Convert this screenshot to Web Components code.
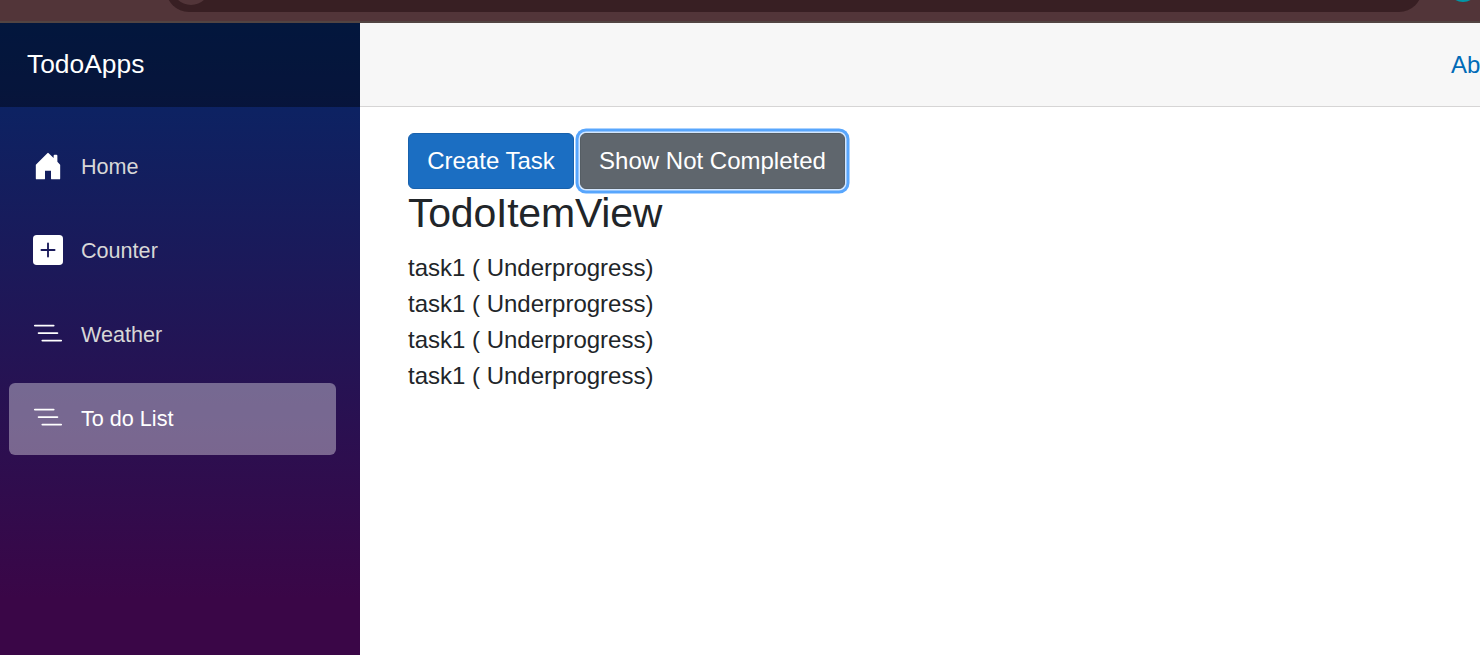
<!DOCTYPE html>
<html lang="en">
<head>
<meta charset="utf-8">
<title>TodoApps</title>
<style>
html,body{margin:0;height:100%;overflow:hidden}
body{font:24px/1.5 "Liberation Sans",Arial,sans-serif;color:#212529;background:#fff}
</style>
</head>
<body>
<todo-app></todo-app>
<script>
const define = (name, html, setup) => customElements.define(name, class extends HTMLElement {
  connectedCallback() {
    if (this.shadowRoot) return;
    this.attachShadow({ mode: 'open' }).innerHTML = html;
    if (setup) setup(this);
  }
});

const icons = {
  home: 'M6.4 14.6V10.5H9.6V14.6a.5.5 0 0 0 .5.5h3.9a.5.5 0 0 0 .5-.5v-7.1a.5.5 0 0 0-.146-.354L13 5.793V2.5a.5.5 0 0 0-.5-.5h-1a.5.5 0 0 0-.5.5v1.293L8.354 1.146a.5.5 0 0 0-.708 0l-6 6A.5.5 0 0 0 1.5 7.5v7.1a.5.5 0 0 0 .5.5h3.9a.5.5 0 0 0 .5-.5Z',
  plus: 'M2 0a2 2 0 0 0-2 2v12a2 2 0 0 0 2 2h12a2 2 0 0 0 2-2V2a2 2 0 0 0-2-2H2zm6.5 4.5v3h3a.5.5 0 0 1 0 1h-3v3a.5.5 0 0 1-1 0v-3h-3a.5.5 0 0 1 0-1h3v-3a.5.5 0 0 1 1 0z',
  list: 'M4.5 11.5A.5.5 0 0 1 5 11h10a.5.5 0 0 1 0 1H5a.5.5 0 0 1-.5-.5zm-2-4A.5.5 0 0 1 3 7h10a.5.5 0 0 1 0 1H3a.5.5 0 0 1-.5-.5zm-2-4A.5.5 0 0 1 1 3h10a.5.5 0 0 1 0 1H1a.5.5 0 0 1-.5-.5z'
};

define('browser-edge', `<style>
  :host{display:flex;box-sizing:border-box;height:23px;padding:0 0 0 166px;background:#523539;border-bottom:2px solid #524442;overflow:hidden;align-items:flex-end}
  .address{flex:none;width:1256px;height:46px;margin-bottom:9px;border-radius:23px;background:#381f23;display:flex;align-items:flex-end}
  .site{width:38px;height:38px;border-radius:50%;background:#523539;margin:0 0 7.5px 6px}
  .avatar{flex:none;width:30px;height:30px;border-radius:50%;background:#0097a7;margin:0 0 19px 26px}
</style><div class="address"><div class="site"></div></div><div class="avatar"></div>`);

define('nav-item', `<style>
  :host{display:block}
  a{display:flex;align-items:center;height:72px;padding-left:24px;border-radius:6px;color:#d7d7d7;font-size:21.6px;line-height:72px;box-sizing:border-box}
  :host([active]) a{background:rgba(255,255,255,.37);color:#fff}
  svg{width:30px;height:30px;margin:-2px 18px 0 0;fill:#fff;flex:none}
</style><a><svg viewBox="0 0 16 16"><path/></svg><slot></slot></a>`,
  el => el.shadowRoot.querySelector('path').setAttribute('d', icons[el.getAttribute('icon')]));

define('side-bar', `<style>
  :host{display:block;width:360px;height:822px;flex:none;background:linear-gradient(180deg,rgb(5,39,103) 0%,#3a0647 70%)}
  .brand{height:84px;box-sizing:border-box;padding:0 0 1px 27px;display:flex;align-items:center;background:rgba(0,0,0,.4);color:#fff;font-size:26.4px}
  nav{display:grid;gap:12px;padding:24px 24px 0 9px}
</style><div class="brand">TodoApps</div>
<nav><nav-item icon="home">Home</nav-item><nav-item icon="plus">Counter</nav-item><nav-item icon="list">Weather</nav-item><nav-item icon="list" active>To do List</nav-item></nav>`);

define('top-row', `<style>
  :host{display:flex;align-items:center;height:84px;box-sizing:border-box;background:#f7f7f7;border-bottom:1px solid #d6d5d5;overflow:hidden}
  a{margin-left:1091px;color:#006bb7;white-space:nowrap}
</style><a>Ab</a>`);

define('app-button', `<style>
  :host{display:block}
  button{display:block;font:inherit;color:#fff;background:#1b6ec2;border:1px solid #1861ac;border-radius:6px;padding:9px 18px;height:56px;width:100%;line-height:36px;white-space:nowrap}
  :host([kind=secondary]) button{background:#5f666d;border-color:#565e64;box-shadow:0 0 0 1.5px #d3e6fe,0 0 0 4.5px #58a6fd}
</style><button><slot></slot></button>`);

define('todo-view', `<style>
  :host{display:block;padding:26px 48px 0}
  .actions{display:flex;gap:6px}
  .create{width:166px}.filter{width:265px}
  h3{margin:0 0 13px;font-size:41px;font-weight:400;line-height:48px;letter-spacing:-.22px}
</style><div class="actions"><app-button class="create">Create Task</app-button><app-button class="filter" kind="secondary">Show Not Completed</app-button></div>
<h3>TodoItemView</h3>
<div>task1 ( Underprogress)</div><div>task1 ( Underprogress)</div><div>task1 ( Underprogress)</div><div>task1 ( Underprogress)</div>`);

define('todo-app', `<style>
  :host{display:block;height:655px;overflow:hidden}
  .page{display:flex}
  main{flex:1;min-width:0}
</style><browser-edge></browser-edge><div class="page"><side-bar></side-bar><main><top-row></top-row><todo-view></todo-view></main></div>`);
</script>
</body>
</html>
